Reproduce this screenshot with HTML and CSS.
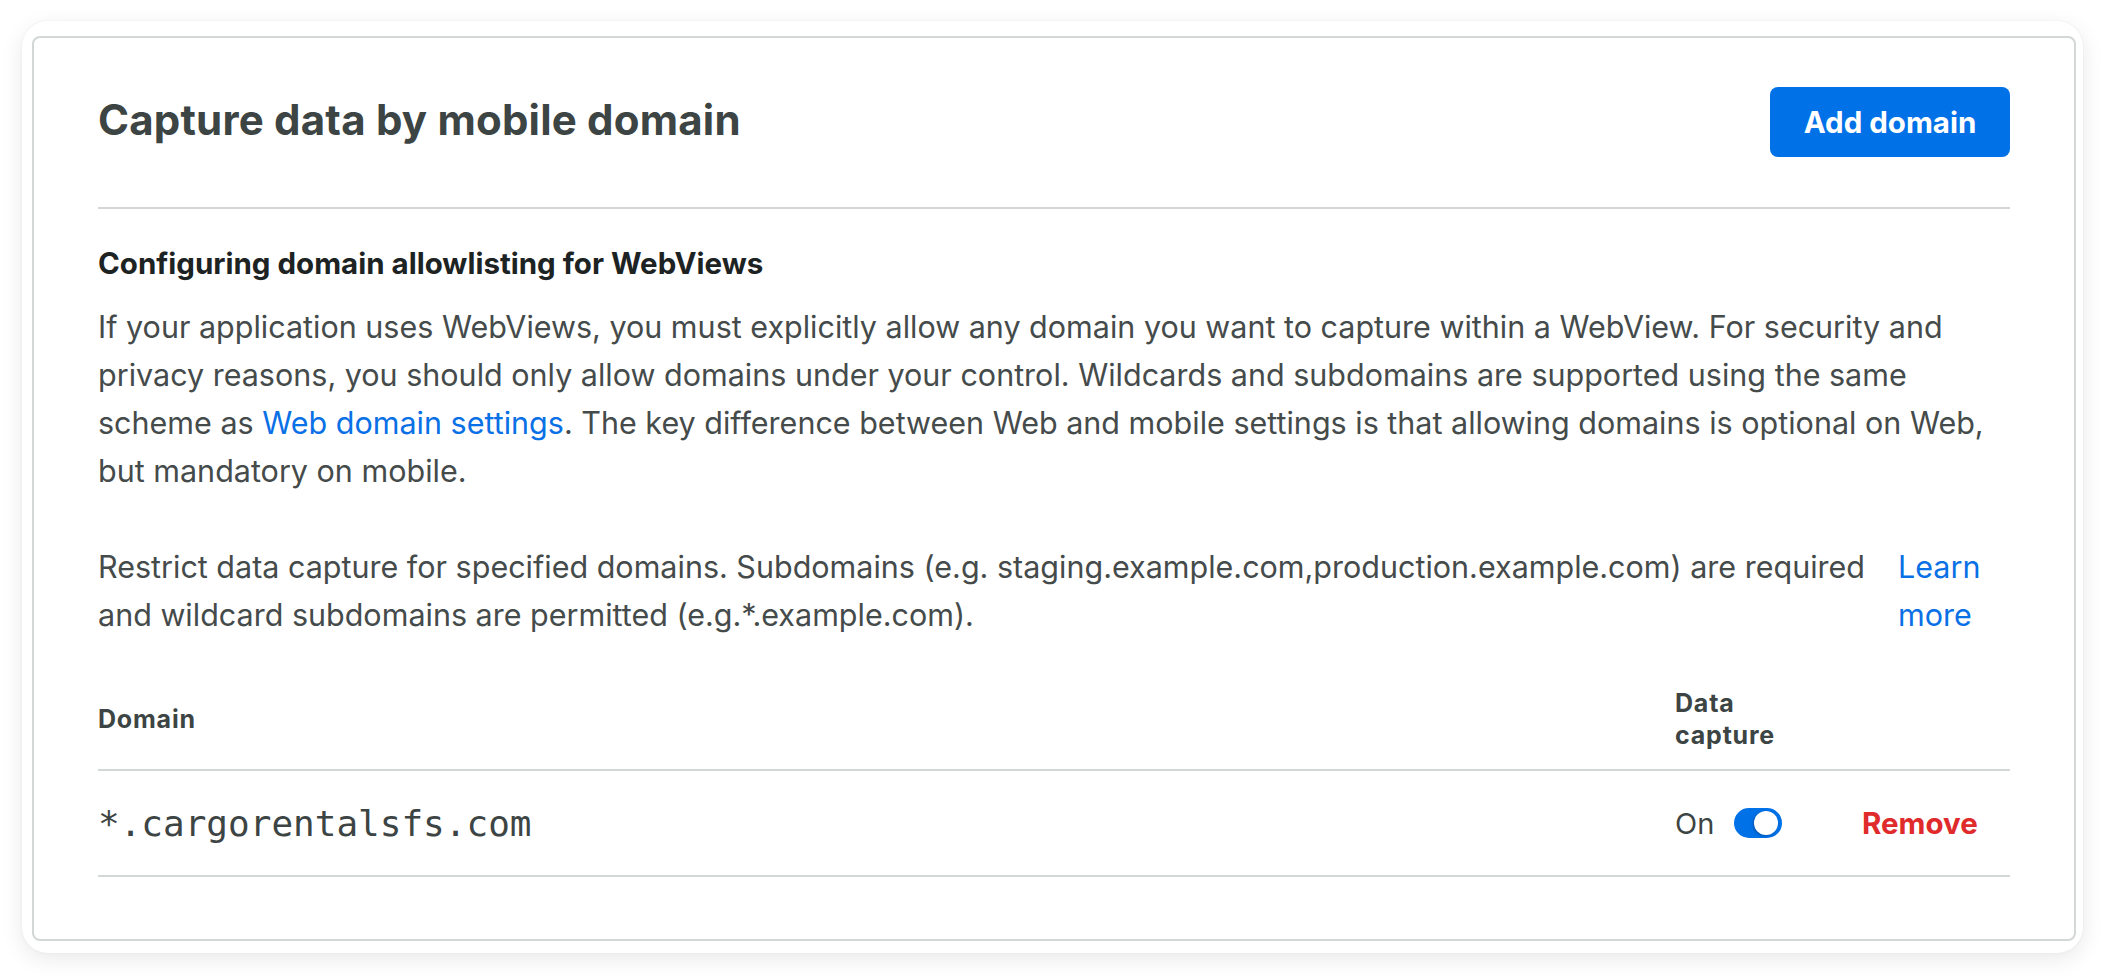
FILE: index.html
```html
<!DOCTYPE html>
<html lang="en">
<head>
<meta charset="utf-8">
<title>Capture data by mobile domain</title>
<link rel="stylesheet" href="styles.css">
</head>
<body>
<div class="frame">
  <section class="card">
    <header class="card-header">
      <h1 class="title">Capture data by mobile domain</h1>
      <button class="btn-primary" type="button">Add domain</button>
    </header>
    <h2 class="subheading">Configuring domain allowlisting for WebViews</h2>
    <p class="text">If your application uses WebViews, you must explicitly allow any domain you want to capture within a WebView. For security and<br>privacy reasons, you should only allow domains under your control. Wildcards and subdomains are supported using the same<br>scheme as <a class="link" href="#">Web domain settings</a>. The key difference between Web and mobile settings is that allowing domains is optional on Web,<br>but mandatory on mobile.</p>
    <div class="restrict">
      <p class="text">Restrict data capture for specified domains. Subdomains (e.g. staging.example.com,production.example.com) are required<br>and wildcard subdomains are permitted (e.g.*.example.com).</p>
      <a class="link learn" href="#">Learn more</a>
    </div>
    <div class="table">
      <div class="row row-head">
        <div class="cell"><span class="th">Domain</span></div>
        <div class="cell"><span class="th th-wrap">Data capture</span></div>
        <div class="cell"></div>
      </div>
      <div class="row row-body">
        <div class="cell"><span class="mono">*.cargorentalsfs.com</span></div>
        <div class="cell capture">
          <span class="state">On</span>
          <span class="toggle"><span class="knob"></span></span>
        </div>
        <div class="cell"><a class="remove" href="#">Remove</a></div>
      </div>
    </div>
  </section>
</div>
</body>
</html>
```
FILE: styles.css
```css
* { box-sizing: border-box; }
body {
  margin: 0;
  background: #ffffff;
  font-family: Inter, "Noto Sans", sans-serif;
  color: #454b4b;
}
.frame {
  margin: 21px 23px 23px 22px;
  padding: 15px 7px 12px 10px;
  background: #ffffff;
  border-radius: 26px;
  box-shadow: 0 6px 22px rgba(0, 0, 0, 0.09), 0 0 3px rgba(0, 0, 0, 0.05);
}
.card {
  border: 2px solid #d3d7d7;
  border-radius: 8px;
  padding: 49px 64px 62px;
}
.card-header {
  display: flex;
  justify-content: space-between;
  align-items: center;
  padding-bottom: 50px;
  border-bottom: 2px solid #d3d7d7;
}
.title {
  margin: 0 0 4px;
  font-size: 42px;
  line-height: 52px;
  font-weight: 700;
  letter-spacing: 0.2px;
  color: #3d4444;
}
.btn-primary {
  height: 70px;
  width: 240px;
  border: 0;
  border-radius: 8px;
  background: #0171e8;
  color: #ffffff;
  font-family: inherit;
  font-size: 29.5px;
  font-weight: 700;
}
.subheading {
  margin: 34px 0 20px;
  font-size: 29.5px;
  line-height: 40px;
  font-weight: 700;
  color: #1d2323;
}
.text {
  margin: 0;
  font-size: 30.5px;
  line-height: 48px;
  white-space: nowrap;
  color: #454b4b;
}
.link {
  color: #0a70e6;
  text-decoration: none;
}
.restrict {
  display: flex;
  gap: 16px;
  margin-top: 48px;
}
.restrict .text { flex: 1; }
.learn {
  flex: 0 0 112px;
  font-size: 30.5px;
  line-height: 48px;
}
.table { margin-top: 48px; }
.row {
  display: grid;
  grid-template-columns: 1fr 187px 148px;
  align-items: center;
  border-bottom: 2px solid #d3d7d7;
}
.row-head {
  padding-bottom: 18px;
  font-size: 25px;
  line-height: 32px;
  font-weight: 700;
  letter-spacing: 0.8px;
  color: #3d4444;
}
.th-wrap { display: block; width: min-content; }
.row-body { height: 106px; }
.mono {
  font-family: "DejaVu Sans Mono", monospace;
  font-size: 36px;
  color: #3d4444;
}
.capture {
  display: flex;
  align-items: center;
  gap: 20px;
  font-size: 29px;
  color: #3d4444;
}
.toggle {
  display: flex;
  justify-content: flex-end;
  align-items: center;
  width: 48px;
  height: 30px;
  padding: 0 4px;
  border-radius: 15px;
  background: #0171e8;
}
.knob {
  width: 24px;
  height: 24px;
  border-radius: 50%;
  background: #ffffff;
  box-shadow: -1px 1px 3px rgba(0, 0, 0, 0.25);
}
.remove {
  color: #df2b2b;
  font-size: 29.5px;
  font-weight: 700;
  text-decoration: none;
}
```
